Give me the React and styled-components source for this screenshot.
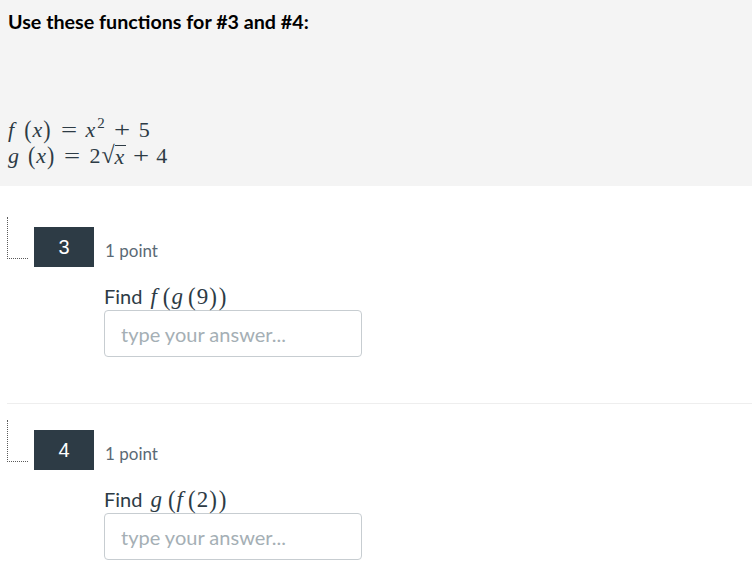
import React from 'react';
import styled, { createGlobalStyle } from 'styled-components';

const GlobalStyle = createGlobalStyle`
  html, body {
    margin: 0;
    padding: 0;
    background: #ffffff;
  }
  body {
    font-family: Lato, 'Noto Sans', sans-serif;
    color: #2d3b45;
  }
`;

const Page = styled.div`
  width: 752px;
  height: 572px;
  overflow: hidden;
  background: #ffffff;
`;

const Intro = styled.section`
  box-sizing: border-box;
  height: 186px;
  background: #f4f4f4;
  padding: 9px 8px 0;
`;

const Title = styled.h2`
  margin: 0;
  font-family: Lato, sans-serif;
  font-weight: 700;
  font-size: 19.7px;
  line-height: 26px;
  color: #000000;
`;

const Formulas = styled.div`
  margin-top: 82px;
  display: flex;
  flex-direction: column;
`;

const MathLine = styled.div`
  font-family: 'Liberation Serif', 'Times New Roman', serif;
  font-size: 22px;
  line-height: 26px;
  color: #2d3b45;
  white-space: nowrap;
`;

const V = styled.i`
  font-family: 'Liberation Serif', 'Times New Roman', serif;
  font-style: italic;
  margin-right: ${({ $gap }) => $gap || 0}px;
`;

const P = styled.span`
  display: inline-block;
  margin: 0 1px;
  transform: scaleY(1.1);
`;

const Op = styled.span`
  display: inline-block;
  width: 16px;
  text-align: center;
  margin: 0 ${({ $space }) => $space || 9}px;
  transform: scaleX(1.3);
`;

const Sup = styled.sup`
  font-size: 15px;
  vertical-align: 9px;
  line-height: 0;
  margin-left: 2px;
`;

const Sqrt = styled.span`
  display: inline-flex;
  align-items: flex-end;
  margin-left: 1px;
`;

const Radical = styled.span`
  font-size: 24px;
  line-height: 24px;
`;

const Radicand = styled.span`
  border-top: 1px solid #2d3b45;
  line-height: 21px;
  padding: 0 2px 0 0;
`;

const Questions = styled.div`
  padding-left: 7px;
`;

const Question = styled.section`
  padding-top: ${({ $top }) => $top}px;
`;

const Header = styled.div`
  display: flex;
  align-items: flex-start;
  height: 40px;
`;

const Marker = styled.span`
  box-sizing: border-box;
  width: 21px;
  height: 42px;
  margin-top: -10px;
  border-left: 1px dotted #5a5a5a;
  border-bottom: 1px dotted #5a5a5a;
`;

const Number = styled.div`
  margin-left: 6px;
  width: 60px;
  height: 40px;
  background: #2d3b45;
  color: #ffffff;
  display: flex;
  align-items: center;
  justify-content: center;
  font-family: 'Liberation Sans', Arial, sans-serif;
  font-size: 20px;
`;

const Points = styled.span`
  margin-left: 11px;
  align-self: center;
  padding-top: 7px;
  font-family: Lato, sans-serif;
  font-size: 17px;
  color: #5b6a75;
`;

const Body = styled.div`
  margin-left: 97px;
  padding-top: 16px;
`;

const Prompt = styled.div`
  font-family: Lato, sans-serif;
  font-size: 20px;
  line-height: 26px;
  color: #2d3b45;
  display: flex;
  align-items: baseline;
`;

const PromptMath = styled.span`
  font-family: 'Liberation Serif', 'Times New Roman', serif;
  font-size: 23px;
  margin-left: 8px;
  white-space: nowrap;
`;

const Answer = styled.input`
  box-sizing: border-box;
  display: block;
  margin-top: 0;
  width: 258px;
  height: 47px;
  border: 1px solid #c7cdd1;
  border-radius: 4px;
  padding: 0 16px;
  font-family: Lato, sans-serif;
  font-size: 20px;
  color: #2d3b45;
  background: #ffffff;
  outline: none;
  &::placeholder {
    color: #a5afb5;
  }
`;

const Divider = styled.hr`
  margin: 46px 0 0;
  border: none;
  border-top: 1px solid #eeeeee;
`;

const items = [
  { n: 3, top: 41, expr: ['f', 'g', '9'] },
  { n: 4, top: 26, expr: ['g', 'f', '2'] },
];

const App = () => (
  <Page>
    <GlobalStyle />
    <Intro>
      <Title>Use these functions for #3 and #4:</Title>
      <Formulas>
        <MathLine>
          <V $gap={9}>f</V>
          <P>(</P>
          <V>x</V>
          <P>)</P>
          <Op>=</Op>
          <V>x</V>
          <Sup>2</Sup>
          <Op>+</Op>5
        </MathLine>
        <MathLine>
          <V $gap={8}>g</V>
          <P>(</P>
          <V>x</V>
          <P>)</P>
          <Op>=</Op>2
          <Sqrt>
            <Radical>√</Radical>
            <Radicand>
              <V>x</V>
            </Radicand>
          </Sqrt>
          <Op $space={7}>+</Op>4
        </MathLine>
      </Formulas>
    </Intro>

    <Questions>
      {items.map((q, i) => (
        <React.Fragment key={q.n}>
          {i > 0 && <Divider />}
          <Question $top={q.top}>
            <Header>
              <Marker />
              <Number>{q.n}</Number>
              <Points>1 point</Points>
            </Header>
            <Body>
              <Prompt>
                Find
                <PromptMath>
                  <V $gap={5}>{q.expr[0]}</V>
                  <P>(</P>
                  <V $gap={4}>{q.expr[1]}</V>
                  <P>(</P>
                  {q.expr[2]}
                  <P>)</P>
                  <P>)</P>
                </PromptMath>
              </Prompt>
              <Answer placeholder='type your answer...' />
            </Body>
          </Question>
        </React.Fragment>
      ))}
    </Questions>
  </Page>
);

export default App;
